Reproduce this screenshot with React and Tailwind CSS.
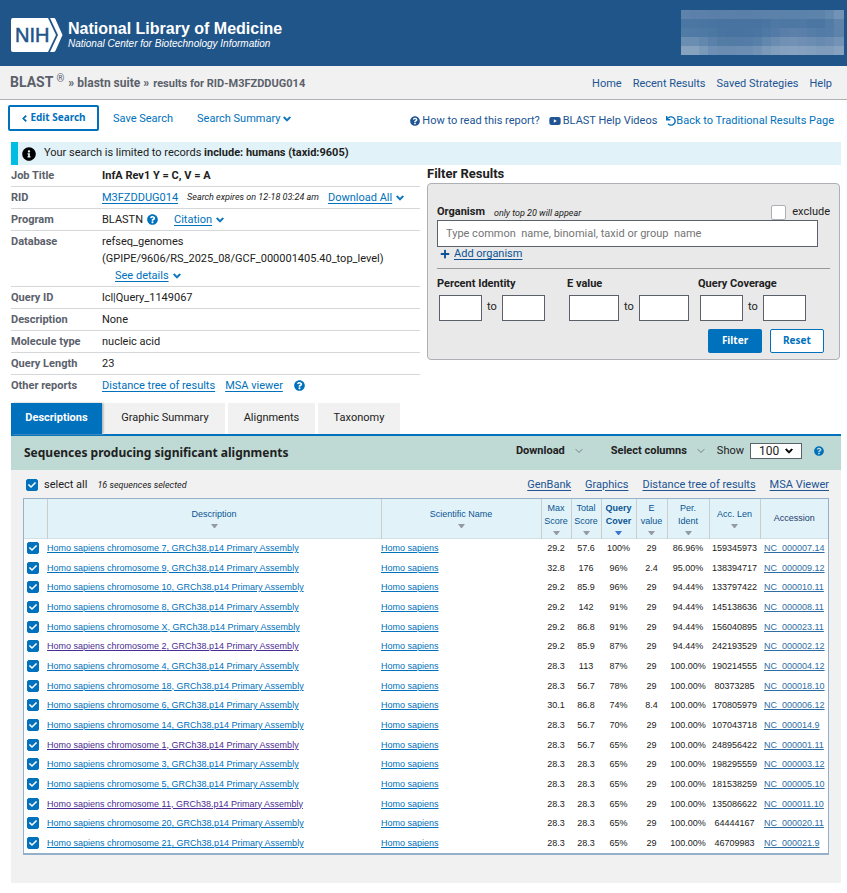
import { useState } from 'react';
import { FaCheck, FaChevronDown, FaChevronLeft, FaInfoCircle, FaPlus, FaQuestionCircle, FaUndo, FaYoutube } from 'react-icons/fa';
import { ChevronDown } from 'lucide-react';
import clsx from 'clsx';

const HITS = [
  { chr: '7',  max: '29.2', total: '57.6', cover: '100%', e: '29',  ident: '86.96%',  len: '159345973', acc: 'NC_000007.14' },
  { chr: '9',  max: '32.8', total: '176',  cover: '96%',  e: '2.4', ident: '95.00%',  len: '138394717', acc: 'NC_000009.12' },
  { chr: '10', max: '29.2', total: '85.9', cover: '96%',  e: '29',  ident: '94.44%',  len: '133797422', acc: 'NC_000010.11' },
  { chr: '8',  max: '29.2', total: '142',  cover: '91%',  e: '29',  ident: '94.44%',  len: '145138636', acc: 'NC_000008.11' },
  { chr: 'X',  max: '29.2', total: '86.8', cover: '91%',  e: '29',  ident: '94.44%',  len: '156040895', acc: 'NC_000023.11' },
  { chr: '2',  max: '29.2', total: '85.9', cover: '87%',  e: '29',  ident: '94.44%',  len: '242193529', acc: 'NC_000002.12', visited: true },
  { chr: '4',  max: '28.3', total: '113',  cover: '87%',  e: '29',  ident: '100.00%', len: '190214555', acc: 'NC_000004.12' },
  { chr: '18', max: '28.3', total: '56.7', cover: '78%',  e: '29',  ident: '100.00%', len: '80373285',  acc: 'NC_000018.10' },
  { chr: '6',  max: '30.1', total: '86.8', cover: '74%',  e: '8.4', ident: '100.00%', len: '170805979', acc: 'NC_000006.12' },
  { chr: '14', max: '28.3', total: '56.7', cover: '70%',  e: '29',  ident: '100.00%', len: '107043718', acc: 'NC_000014.9' },
  { chr: '1',  max: '28.3', total: '56.7', cover: '65%',  e: '29',  ident: '100.00%', len: '248956422', acc: 'NC_000001.11', visited: true },
  { chr: '3',  max: '28.3', total: '28.3', cover: '65%',  e: '29',  ident: '100.00%', len: '198295559', acc: 'NC_000003.12' },
  { chr: '5',  max: '28.3', total: '28.3', cover: '65%',  e: '29',  ident: '100.00%', len: '181538259', acc: 'NC_000005.10' },
  { chr: '11', max: '28.3', total: '28.3', cover: '65%',  e: '29',  ident: '100.00%', len: '135086622', acc: 'NC_000011.10', visited: true },
  { chr: '20', max: '28.3', total: '28.3', cover: '65%',  e: '29',  ident: '100.00%', len: '64444167',  acc: 'NC_000020.11' },
  { chr: '21', max: '28.3', total: '28.3', cover: '65%',  e: '29',  ident: '100.00%', len: '46709983',  acc: 'NC_000021.9' },
];

const COLUMNS = [
  { lines: ['Description'], width: 'w-[334px]' },
  { lines: ['Scientific Name'], width: '' },
  { lines: ['Max', 'Score'], width: 'w-[30px]' },
  { lines: ['Total', 'Score'], width: 'w-[30px]' },
  { lines: ['Query', 'Cover'], width: 'w-[35px]', sorted: true },
  { lines: ['E', 'value'], width: 'w-[31px]' },
  { lines: ['Per.', 'Ident'], width: 'w-[42px]' },
  { lines: ['Acc. Len'], width: 'w-[51px]' },
];

// masked account area, one shade per block
const MASK = [
  ['#5d82ab', '#5b80aa', '#5c80aa', '#5a80a9', '#5a80aa', '#5b81aa', '#5a80aa', '#5a80a9', '#5b80aa', '#5c81aa', '#5b83aa', '#5c82ab', '#5a82aa', '#5b82aa', '#5c83aa', '#5d83aa', '#6489ae', '#7293b5'],
  ['#4a76a3', '#4b76a2', '#4a75a2', '#4974a1', '#4872a0', '#4872a0', '#4872a0', '#4872a0', '#4872a0', '#4b74a2', '#5078a5', '#4f77a4', '#4e78a4', '#5078a4', '#4b76a2', '#4b76a2', '#527ba6', '#5e84ac'],
  ['#4f7ba4', '#507aa5', '#4f79a5', '#4b77a3', '#4973a0', '#4873a0', '#4873a0', '#4874a0', '#4a75a2', '#4e79a4', '#547ba8', '#587ea9', '#5b80aa', '#597faa', '#567ca8', '#527ca6', '#547ca8', '#5d83ab'],
  ['#6a8db2', '#6a8db2', '#6388ae', '#5b80aa', '#547da5', '#527ca4', '#537ba5', '#557ca8', '#587fa8', '#6187ad', '#6a8cb1', '#7090b4', '#7191b5', '#6e8fb3', '#6b8db2', '#678ab0', '#6c8db1', '#7393b6'],
  ['#86a2bf', '#86a2bf', '#7a9aba', '#6f90b4', '#6b8db1', '#6b8db1', '#6c8eb2', '#6c8eb2', '#7292b5', '#7b9aba', '#829ebd', '#86a1bf', '#87a2c0', '#86a1bf', '#839fbe', '#7f9cbc', '#7f9cbc', '#87a2bf'],
];

const link = 'text-[#0071bc] underline underline-offset-2';
const navy = 'text-[#205493]';

function NihLogo() {
  return (
    <svg className="h-[34px] w-[52px] shrink-0" viewBox="0 0 52 34" aria-hidden="true">
      <path d="M2 0h35l8 17-8 17H2a2 2 0 0 1-2-2V2a2 2 0 0 1 2-2Z" fill="#fff" />
      <path d="M39 0h3.500a2 2 0 0 1 2 1.200l7 15.800-7 15.800a2 2 0 0 1-2 1.200H39l8-17Z" fill="#fff" />
      <text x="4" y="24" fontFamily="Liberation Sans, sans-serif" fontSize="20" fill="#20558a" stroke="#20558a" strokeWidth=".5">NIH</text>
    </svg>
  );
}

function Caret({ className }) {
  return <FaChevronDown className={clsx('size-2 stroke-current stroke-[60]', className)} />;
}

function Tick({ id, label, checked, onChange }) {
  return (
    <span className="relative block size-3">
      <input id={id} type="checkbox" aria-label={label} checked={checked} onChange={onChange}
        className="block size-3 appearance-none rounded-xs border border-[#5b616b] bg-white checked:border-[#0071bc] checked:bg-[#0071bc]" />
      {checked && <FaCheck className="pointer-events-none absolute inset-0.5 size-2 text-white" />}
    </span>
  );
}

function InfoRow({ label, children }) {
  return (
    <div className="flex border-b border-[#d6d7d9] py-0.5 leading-[17px] last:border-b-0">
      <dt className="w-[91px] shrink-0 font-bold text-[#5b616b]">{label}</dt>
      <dd className="flex min-w-0 flex-1 flex-wrap items-center">{children}</dd>
    </div>
  );
}

function Range({ title, size, className }) {
  return (
    <fieldset className={className}>
      <legend className="font-bold">{title}</legend>
      <div className="flex items-center gap-[5px] pt-[3px] pl-0.5">
        <input aria-label={`${title} from`} className={clsx('h-[26px] border border-[#5b616b] bg-white px-1', size)} />
        <span>to</span>
        <input aria-label={`${title} to`} className={clsx('h-[26px] border border-[#5b616b] bg-white px-1', size)} />
      </div>
    </fieldset>
  );
}

function SortArrow({ active }) {
  return (
    <svg className="mx-auto mt-[3px] h-1 w-[7px]" viewBox="0 0 7 4" aria-hidden="true">
      <path d="M0 0h7L4 4H3Z" fill={active ? '#3a76d8' : '#939aa1'} />
    </svg>
  );
}

export default function App() {
  const [selected, setSelected] = useState(HITS.map(() => true));
  const count = selected.filter(Boolean).length;
  const allOn = count === HITS.length;

  const toggle = i => setSelected(selected.map((s, j) => (j === i ? !s : s)));

  return (
    <div className="min-h-screen bg-white font-['Roboto',sans-serif] text-xs text-[#212121]">
      {/* Agency header */}
      <header className="flex h-[66px] items-center justify-between bg-[#20558a] pr-[3px] pl-[11px]">
        <a href="#" className="flex items-center gap-[5px] pt-1 font-['Liberation_Sans',sans-serif] text-white">
          <NihLogo />
          <span>
            <span className="block text-base leading-[18px] font-bold">National Library of Medicine</span>
            <span className="block text-[10px] leading-3 italic">National Center for Biotechnology Information</span>
          </span>
        </a>
        <svg className="mb-0.5 h-[45px] w-[164px]" viewBox="0 0 164 45" preserveAspectRatio="none" shapeRendering="crispEdges" aria-hidden="true">
          {MASK.map((row, y) => row.map((fill, x) => (
            <rect key={`${x}-${y}`} x={x * 9 + 1} y={y * 9} width={x === 17 ? 10 : 9} height="9" fill={fill} />
          )))}
        </svg>
      </header>

      {/* Breadcrumb */}
      <div className="flex h-[34px] items-center justify-between border-b border-[#aeb0b5] bg-[#f1f1f1] pr-[15px] pl-[10px]">
        <h1 className="flex items-baseline gap-1 leading-4 font-bold text-[#5b616b]">
          <span className="text-sm leading-4">BLAST <sup className="text-[10px] font-normal">®</sup></span>
          <span>» blastn suite »</span>
          <span className="text-[11px]">results for RID-M3FZDDUG014</span>
        </h1>
        <nav className={clsx('flex gap-[11px] pt-1 text-[11px]', navy)}>
          <a href="#">Home</a>
          <a href="#">Recent Results</a>
          <a href="#">Saved Strategies</a>
          <a href="#">Help</a>
        </nav>
      </div>

      {/* Toolbar */}
      <div className="flex items-center justify-between pt-[5px] pr-[13px] pb-[11px] pl-2 text-[11px]">
        <div className="flex items-center text-[#0071bc]">
          <button className="flex h-[26px] w-[91px] items-center justify-center gap-0.5 rounded-xs border-2 border-[#0071bc] font-['Noto_Sans',sans-serif] text-[10px] font-bold">
            <FaChevronLeft className="size-[7px] stroke-current stroke-[60]" />Edit Search
          </button>
          <a href="#" className="ml-[14px] pt-0.5">Save Search</a>
          <button className="ml-6 flex items-center gap-[3px] pt-0.5">Search Summary <Caret /></button>
        </div>
        <div className={clsx('flex items-center gap-[9px] pt-1.5', navy)}>
          <a href="#" className="flex items-center gap-0.5"><FaQuestionCircle className="size-[10px]" />How to read this report?</a>
          <a href="#" className="flex items-center gap-0.5"><FaYoutube className="size-3" />BLAST Help Videos</a>
          <a href="#" className="flex items-center text-[#0071bc]"><FaUndo className="size-[10px]" />Back to Traditional Results Page</a>
        </div>
      </div>

      <main className="pr-[6px] pl-[11px]">
        <p className="flex h-[23px] items-center gap-2 border-l-[7px] border-[#00bde3] bg-[#e1f3f8] pl-1 text-[11px]">
          <FaInfoCircle className="size-[14px] text-black" />
          <span>Your search is limited to records <b>include: humans (taxid:9605)</b></span>
        </p>

        <div className="flex items-start gap-[7px] pr-px">
          {/* Job details */}
          <dl className="w-[409px] shrink-0 text-[11px]">
            <InfoRow label="Job Title"><b>InfA Rev1 Y = C, V = A</b></InfoRow>
            <InfoRow label="RID">
              <a href="#" className={link}>M3FZDDUG014</a>
              <i className="mx-[9px] text-[9px]">Search expires on 12-18 03:24 am</i>
              <a href="#" className={link}>Download All</a>
              <Caret className="ml-1 text-[#0071bc]" />
            </InfoRow>
            <InfoRow label="Program">
              BLASTN <FaQuestionCircle className="ml-1 size-[11px] text-[#0071bc]" />
              <a href="#" className={clsx('ml-4', link)}>Citation</a>
              <Caret className="ml-1 text-[#0071bc]" />
            </InfoRow>
            <InfoRow label="Database">
              <span className="w-full">refseq_genomes</span>
              <span className="w-full">(GPIPE/9606/RS_2025_08/GCF_000001405.40_top_level)</span>
              <a href="#" className={clsx('ml-[13px]', link)}>See details</a>
              <Caret className="ml-1 text-[#0071bc]" />
            </InfoRow>
            <InfoRow label="Query ID">lcl|Query_1149067</InfoRow>
            <InfoRow label="Description">None</InfoRow>
            <InfoRow label="Molecule type">nucleic acid</InfoRow>
            <InfoRow label="Query Length">23</InfoRow>
            <InfoRow label="Other reports">
              <a href="#" className={link}>Distance tree of results</a>
              <a href="#" className={clsx('ml-[10px]', link)}>MSA viewer</a>
              <FaQuestionCircle className="ml-[11px] size-[11px] text-[#0071bc]" />
            </InfoRow>
          </dl>

          {/* Filter form */}
          <section className="min-w-0 flex-1">
            <h2 className="text-[13px] leading-[18px] font-bold">Filter Results</h2>
            <form className="rounded-sm border border-[#aeb0b5] bg-[#e9e9e9] px-[9px] pt-[21px] pb-[6px] text-[11px]" onSubmit={e => e.preventDefault()}>
              <div className="flex items-center">
                <label htmlFor="organism" className="font-bold">Organism</label>
                <i className="ml-[9px] text-[9px]">only top 20 will appear</i>
                <label className="ml-auto flex items-center gap-[6px]">
                  <input type="checkbox" className="size-[15px] appearance-none rounded-xs border border-[#aeb0b5] bg-white" />
                  exclude
                </label>
              </div>
              <input id="organism" placeholder="Type common  name, binomial, taxid or group  name"
                className="block h-[27px] w-[381px] border border-[#5b616b] bg-white px-2 placeholder:text-[#757575]" />
              <button className="flex items-center gap-1 pl-[3px] leading-[14px] text-[#0b5394]">
                <FaPlus className="size-[10px]" />
                <span className="underline underline-offset-2">Add organism</span>
              </button>
              <div className="mt-[7px] flex border-t border-[#999] pt-2">
                <Range title="Percent Identity" size="w-[43px]" className="w-[130px]" />
                <Range title="E value" size="w-[50px]" className="w-[131px]" />
                <Range title="Query Coverage" size="w-[43px]" />
              </div>
              <div className="mt-2 flex justify-end gap-2 pr-[6px] font-['Noto_Sans',sans-serif] text-[10px] font-bold">
                <button className="h-6 w-[54px] rounded-xs bg-[#0071bc] text-white">Filter</button>
                <button type="reset" className="h-6 w-[54px] rounded-xs border border-[#0071bc] bg-white text-[#0071bc]">Reset</button>
              </div>
            </form>
          </section>
        </div>

        {/* Result tabs */}
        <nav className="mt-[7px] flex h-[31px] gap-[3px] text-[11px]">
          <button className="w-[91px] bg-[#0071bc] font-bold text-white shadow-[2px_0_2px_#bbb]">Descriptions</button>
          <button className="w-[120px] bg-[#f1f1f1]">Graphic Summary</button>
          <button className="w-[87px] bg-[#f1f1f1]">Alignments</button>
          <button className="w-[82px] bg-[#f1f1f1]">Taxonomy</button>
        </nav>

        <section className="border-t-2 border-[#0071bc] bg-[#f1f1f1] pb-7">
          <div className="flex h-[34px] items-center bg-[#bfd9d5] pr-[17px] pl-[13px] text-[11px]">
            <h2 className="font-['Noto_Sans',sans-serif] text-xs font-bold">Sequences producing significant alignments</h2>
            <div className="ml-auto flex items-center pb-1">
              <button className="flex items-center gap-2 font-bold">Download <ChevronDown className="size-3 text-[#5b616b]" strokeWidth={1.5} /></button>
              <button className="ml-[26px] flex items-center gap-2 font-bold">Select columns <ChevronDown className="size-3 text-[#5b616b]" strokeWidth={1.5} /></button>
              <label htmlFor="show" className="ml-2.5">Show</label>
              <span className="relative ml-[6px]">
                <select id="show" defaultValue="100" className="block h-4 w-[52px] appearance-none border border-[#5b616b] bg-white pl-2 text-xs leading-[14px]">
                  <option>10</option>
                  <option>50</option>
                  <option>100</option>
                </select>
                <Caret className="pointer-events-none absolute top-1 right-[9px] text-black" />
              </span>
              <FaQuestionCircle className="ml-3 size-[10px] text-[#0071bc]" />
            </div>
          </div>

          <div className="flex h-7 items-center pt-0.5 pr-3 pl-[15px] text-[11px]">
            <Tick id="select-all" label="Select all" checked={allOn} onChange={() => setSelected(HITS.map(() => !allOn))} />
            <label htmlFor="select-all" className="ml-[6px]">select all</label>
            <i className="ml-[10px] text-[9px]">{count} sequences selected</i>
            <div className={clsx('ml-auto flex gap-[14px]', navy)}>
              <a href="#" className="underline underline-offset-2">GenBank</a>
              <a href="#" className="underline underline-offset-2">Graphics</a>
              <a href="#" className="underline underline-offset-2">Distance tree of results</a>
              <a href="#" className="underline underline-offset-2">MSA Viewer</a>
            </div>
          </div>

          <div className="mr-3 ml-3 border border-b-2 border-[#94b0cb] bg-white font-['Liberation_Sans',sans-serif] text-[9px]">
            <table className="w-full table-fixed border-collapse">
              <thead className="bg-[#e1f3f8] leading-[13px] text-[#0b5394]">
                <tr className="h-[39px] border-b border-[#d0e2e8]">
                  <th className="w-[23px] border-r border-[#ccc]" aria-label="Selected" />
                  {COLUMNS.map(c => (
                    <th key={c.lines.join(' ')} className={clsx('border-r border-[#ccc] p-0', c.width, c.sorted ? 'font-bold' : 'font-normal')}>
                      {c.lines.map(l => <span key={l} className="block">{l}</span>)}
                      <SortArrow active={c.sorted} />
                    </th>
                  ))}
                  <th className="w-[68px] p-0 font-normal text-[#1c3a6e]">Accession</th>
                </tr>
              </thead>
              <tbody className="text-center">
                {HITS.map((h, i) => (
                  <tr key={h.acc} className="h-5 [&:nth-child(3n+2)]:h-[19px]">
                    <td className="p-0 pl-[3px]">
                      <Tick label={`Select chromosome ${h.chr}`} checked={selected[i]} onChange={() => toggle(i)} />
                    </td>
                    <td className="truncate p-0 text-left">
                      <a href="#" className={clsx('underline underline-offset-1', h.visited ? 'text-[#4c2c92]' : 'text-[#0071bc]')}>
                        Homo sapiens chromosome {h.chr}, GRCh38.p14 Primary Assembly
                      </a>
                    </td>
                    <td className="p-0 text-left"><a href="#" className="text-[#0071bc] underline underline-offset-1">Homo sapiens</a></td>
                    <td className="p-0">{h.max}</td>
                    <td className="p-0">{h.total}</td>
                    <td className="p-0">{h.cover}</td>
                    <td className="p-0">{h.e}</td>
                    <td className="p-0">{h.ident}</td>
                    <td className="p-0">{h.len}</td>
                    <td className="p-0 pl-1 text-left"><a href="#" className="text-[#2e6da4] underline underline-offset-1">{h.acc}</a></td>
                  </tr>
                ))}
              </tbody>
            </table>
          </div>
        </section>
      </main>
    </div>
  );
}
